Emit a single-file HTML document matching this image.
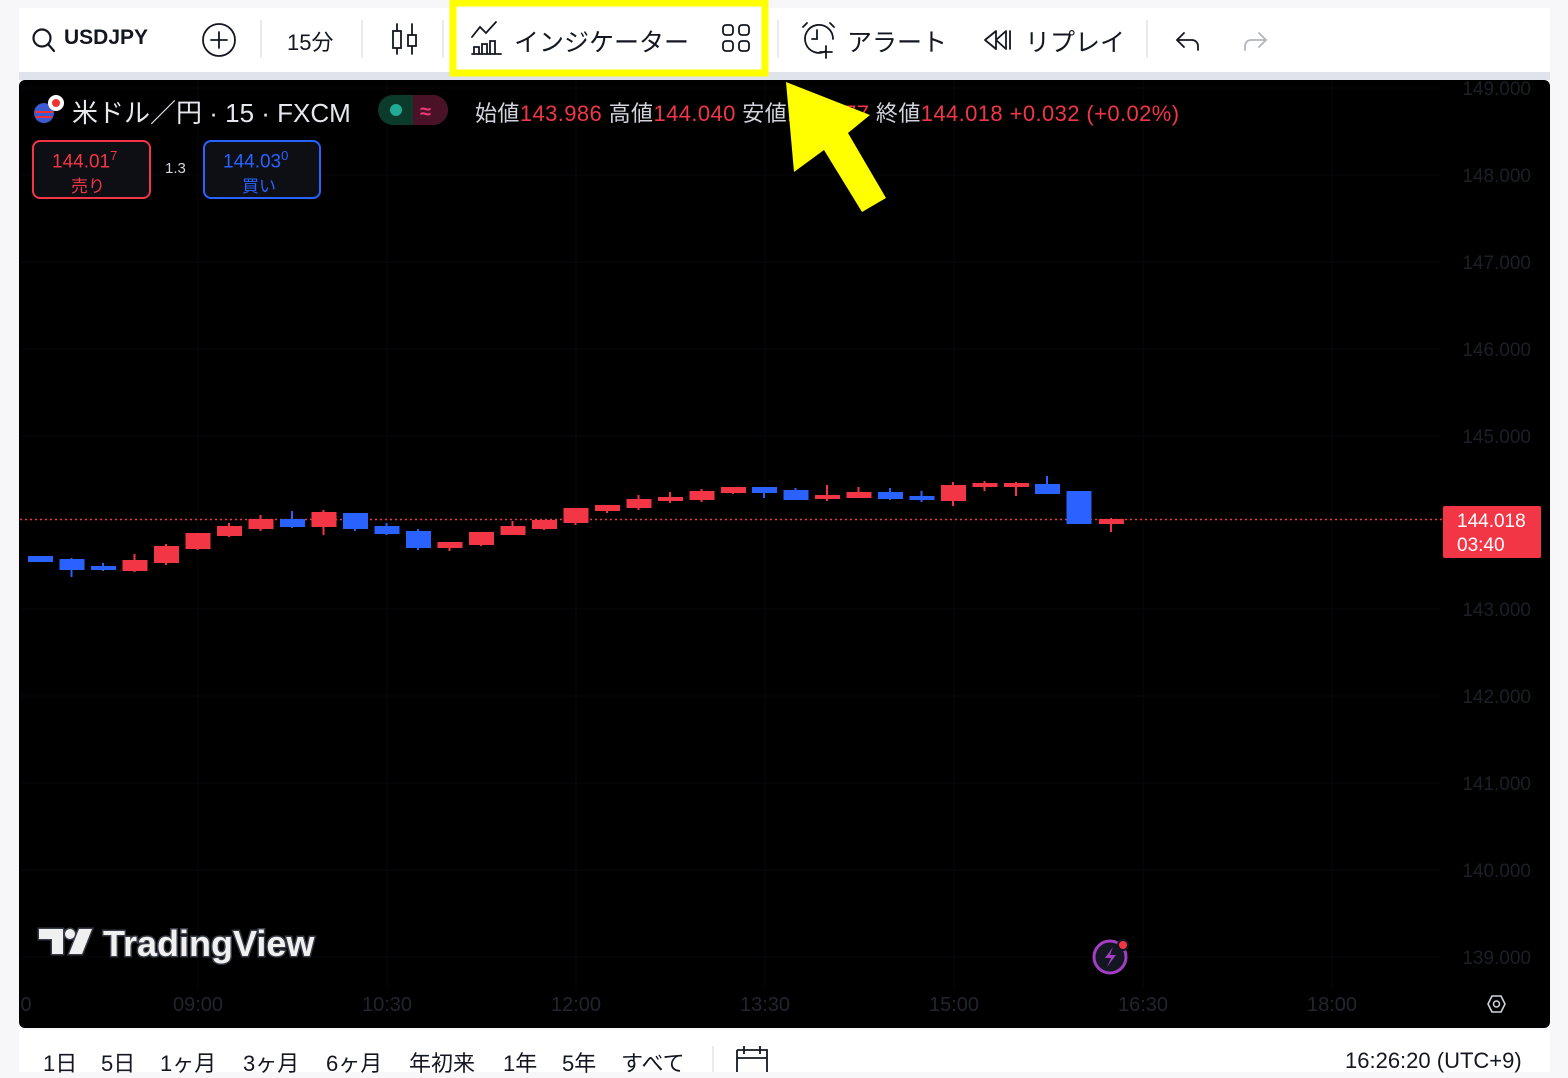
<!DOCTYPE html>
<html><head><meta charset="utf-8"><style>
*{margin:0;padding:0;box-sizing:border-box}
body{width:1568px;height:1072px;overflow:hidden;background:#f7f7f9;font-family:"Liberation Sans","Noto Sans CJK JP",sans-serif;position:relative}
.a{position:absolute;white-space:nowrap}
</style></head><body>
<div class="a" style="left:19px;top:8px;width:1531px;height:66px;background:#fff"></div>
<div class="a" style="left:19px;top:72px;width:1531px;height:8px;background:#e0e3eb"></div>
<div class="a" style="left:19px;top:1030px;width:1531px;height:42px;background:#fff"></div>

<svg class="a" style="left:0;top:0" width="1568" height="1072" viewBox="0 0 1568 1072">
<g fill="none" stroke="#131722" stroke-width="2.2" stroke-linecap="round">
<circle cx="42" cy="38" r="8.5"/><path d="M48 44l6 7"/>
<circle cx="219" cy="40" r="16" stroke-width="1.8"/><path d="M211 40h16M219 32v16" stroke-width="1.8"/>
<path d="M397 24v30M412 24v30" stroke-width="1.8"/><rect x="393" y="31" width="8" height="17" fill="#fff" stroke-width="1.8"/><rect x="408" y="35" width="8" height="11" fill="#fff" stroke-width="1.8"/>
<path d="M472 37l8-10 6 6 10-11" stroke-width="1.8"/><path d="M472 54h29M474 54v-7h5v7M482 54v-10h5v10M490 54v-13h5v13" stroke-width="1.8"/>
<rect x="723" y="25" width="10" height="10" rx="3" stroke-width="1.8"/><rect x="739" y="25" width="10" height="10" rx="3" stroke-width="1.8"/><rect x="723" y="41" width="10" height="10" rx="3" stroke-width="1.8"/><rect x="739" y="41" width="10" height="10" rx="3" stroke-width="1.8"/>
<path d="M826 51a14 14 0 1 1 7-12" stroke-width="1.8"/><path d="M817 30v9h-5M826 46v12M820 52h12M803 27l4-4M830 23l4 4" stroke-width="1.8"/>
<path d="M996 31l-11 9 11 9zM1006 31l-10 9 10 9zM1010 31v18" stroke-width="1.8" stroke-linejoin="round"/>
<path d="M1178 40h14a6 6 0 0 1 6 6v4M1184 33l-7 7 7 7" stroke-width="1.8"/>
<path d="M1265 40h-14a6 6 0 0 0-6 6v4M1259 33l7 7-7 7" stroke="#b2b5be" stroke-width="1.8"/>
</g>
<g stroke="#e0e3eb" stroke-width="1.5"><path d="M261 20v38M362 20v38M443 20v38M778 20v38M1147 20v38M713 1046v26"/></g>
<rect x="453" y="3" width="312" height="70" fill="none" stroke="#ffff00" stroke-width="7"/>
<rect x="19" y="80" width="1531" height="948" rx="6" fill="#000"/>
<g stroke="#08090c" stroke-width="1"><path d="M20 88h1420M20 175h1420M20 262h1420M20 349h1420M20 436h1420M20 609h1420M20 696h1420M20 783h1420M20 870h1420M20 957h1420M198 80v910M387 80v910M576 80v910M765 80v910M954 80v910M1143 80v910M1332 80v910"/></g>
<path d="M20 519.5H1442" stroke="#f23645" stroke-width="1.5" stroke-dasharray="2 3"/>
<rect x="1443" y="506" width="98" height="52" rx="2" fill="#f23645"/>
<text x="1457" y="527" fill="#fff" font-size="19" font-family="Liberation Sans">144.018</text>
<text x="1457" y="551" fill="#fff" font-size="19" font-family="Liberation Sans">03:40</text>
<g fill="#1c1f27" font-size="19" font-family="Liberation Sans" text-anchor="end">
<text x="1531" y="95">149.000</text><text x="1531" y="182">148.000</text><text x="1531" y="269">147.000</text><text x="1531" y="356">146.000</text><text x="1531" y="443">145.000</text><text x="1531" y="616">143.000</text><text x="1531" y="703">142.000</text><text x="1531" y="790">141.000</text><text x="1531" y="877">140.000</text><text x="1531" y="964">139.000</text>
</g>
<g fill="#22252e" font-size="20" font-family="Liberation Sans" text-anchor="middle">
<text x="26" y="1011">0</text><text x="198" y="1011">09:00</text><text x="387" y="1011">10:30</text><text x="576" y="1011">12:00</text><text x="765" y="1011">13:30</text><text x="954" y="1011">15:00</text><text x="1143" y="1011">16:30</text><text x="1332" y="1011">18:00</text>
</g>
<path d="M1488 1004l4-8h9l4 8-4 8h-9z" fill="none" stroke="#d1d4dc" stroke-width="1.6"/><circle cx="1496.5" cy="1004" r="3" fill="none" stroke="#d1d4dc" stroke-width="1.5"/>
<circle cx="1110" cy="957" r="16" fill="#131722" stroke="#a23dc4" stroke-width="3"/><path d="M1113 947l-8 11h6l-4 9 9-12h-6z" fill="#a23dc4"/><circle cx="1123" cy="945" r="5" fill="#f23645" stroke="#131722" stroke-width="2"/>
<g fill="#f0f0f0" stroke="#363a45" stroke-width="3" paint-order="stroke">
<path d="M39 929h24v25h-11v-15h-13z"/><circle cx="70" cy="934" r="5"/><path d="M79 929h13l-10 25h-13z"/>
</g>
<text x="103" y="956" font-family="Liberation Sans" font-weight="bold" font-size="36" stroke="#363a45" stroke-width="3" paint-order="stroke" fill="#f0f0f0">TradingView</text>
<circle cx="44" cy="113" r="10" fill="#3c5bd3"/><path d="M35 112h18M36 117h16" stroke="#e33" stroke-width="2"/><circle cx="56" cy="103" r="8" fill="#fff"/><circle cx="56" cy="103" r="4" fill="#e33"/>
<rect x="378" y="95" width="70" height="30" rx="15" fill="#0c3b2c"/><path d="M413 95h20a15 15 0 0 1 0 30h-20z" fill="#4a1226"/><circle cx="396" cy="110" r="6" fill="#22ab94"/><text x="420" y="118" fill="#f2397a" font-size="20" font-weight="bold">≈</text>
<rect x="33" y="141" width="117" height="57" rx="7" fill="#0d0f14" stroke="#f23645" stroke-width="2"/>
<rect x="204" y="141" width="116" height="57" rx="7" fill="#0d0f14" stroke="#2962ff" stroke-width="2"/>
<path d="M737 1050h30v22M737 1050v22M744 1046v8M760 1046v8M737 1058h30" fill="none" stroke="#131722" stroke-width="1.8"/>
</svg>

<div class="a" style="left:64px;top:26px;font-size:21px;font-weight:bold;color:#131722">USDJPY</div>
<div class="a" style="left:287px;top:25px;font-size:22px;color:#131722">15分</div>
<div class="a" style="left:514px;top:23px;font-size:25px;color:#131722">インジケーター</div>
<div class="a" style="left:847px;top:23px;font-size:25px;color:#131722">アラート</div>
<div class="a" style="left:1025px;top:23px;font-size:25px;color:#131722">リプレイ</div>

<div class="a" style="left:72px;top:93px;font-size:26px;color:#e6e8ee">米ドル／円 · 15 · FXCM</div>
<div class="a" style="left:475px;top:96px;font-size:22px;letter-spacing:0.4px;color:#d1d4dc">始値<span style="color:#f23645">143.986</span> 高値<span style="color:#f23645">144.040</span> 安値<span style="color:#f23645">143.977</span> 終値<span style="color:#f23645">144.018 +0.032 (+0.02%)</span></div>
<div class="a" style="left:52px;top:148px;font-size:19px;color:#f23645">144.01<sup style="font-size:13px">7</sup></div>
<div class="a" style="left:71px;top:172px;font-size:17px;color:#f23645">売り</div>
<div class="a" style="left:165px;top:160px;font-size:15px;color:#d1d4dc">1.3</div>
<div class="a" style="left:223px;top:148px;font-size:19px;color:#2962ff">144.03<sup style="font-size:13px">0</sup></div>
<div class="a" style="left:242px;top:172px;font-size:17px;color:#2962ff">買い</div>

<div class="a" style="left:43px;top:1046px;font-size:22px;color:#131722">1日</div>
<div class="a" style="left:101px;top:1046px;font-size:22px;color:#131722">5日</div>
<div class="a" style="left:160px;top:1046px;font-size:22px;color:#131722">1ヶ月</div>
<div class="a" style="left:243px;top:1046px;font-size:22px;color:#131722">3ヶ月</div>
<div class="a" style="left:326px;top:1046px;font-size:22px;color:#131722">6ヶ月</div>
<div class="a" style="left:409px;top:1046px;font-size:22px;color:#131722">年初来</div>
<div class="a" style="left:503px;top:1046px;font-size:22px;color:#131722">1年</div>
<div class="a" style="left:562px;top:1046px;font-size:22px;color:#131722">5年</div>
<div class="a" style="left:621px;top:1046px;font-size:22px;color:#131722">すべて</div>
<div class="a" style="left:1345px;top:1048px;font-size:22px;color:#131722">16:26:20 (UTC+9)</div>

<svg class="a" style="left:0;top:0" width="1568" height="1072">
<g stroke-width="2">
<g fill="#2962ff" stroke="#2962ff">
<path d="M40 556v5"/><rect x="29" y="557" width="23" height="4"/>
<path d="M71.5 558v19"/><rect x="60.5" y="560" width="23" height="9"/>
<path d="M103 563v8"/><rect x="92" y="567" width="23" height="2"/>
<path d="M292 511v17"/><rect x="281" y="520" width="23" height="6"/>
<path d="M355 514v17"/><rect x="344" y="514" width="23" height="14"/>
<path d="M386.5 523v12"/><rect x="375.5" y="527" width="23" height="6"/>
<path d="M418 529v21"/><rect x="407" y="532" width="23" height="15"/>
<path d="M764 487v11"/><rect x="753" y="488" width="23" height="4"/>
<path d="M795.5 488v12"/><rect x="784.5" y="491" width="23" height="8"/>
<path d="M890 488v12"/><rect x="879" y="493" width="23" height="5"/>
<path d="M921.5 491v11"/><rect x="910.5" y="497" width="23" height="2"/>
<path d="M1047 476v17"/><rect x="1036" y="485" width="23" height="8"/>
<rect x="1067.5" y="492" width="23" height="31"/>
</g>
<g fill="#f23645" stroke="#f23645">
<path d="M134.5 554v18"/><rect x="123.5" y="561" width="23" height="9"/>
<path d="M166 544v21"/><rect x="155" y="547" width="23" height="15"/>
<path d="M197.5 533v17"/><rect x="186.5" y="534" width="23" height="14"/>
<path d="M229 523v14"/><rect x="218" y="527" width="23" height="8"/>
<path d="M260.5 515v16"/><rect x="249.5" y="520" width="23" height="8"/>
<path d="M323.5 510v25"/><rect x="312.5" y="513" width="23" height="13"/>
<path d="M449.5 543v8"/><rect x="438.5" y="543" width="23" height="4"/>
<path d="M481 532v14"/><rect x="470" y="533" width="23" height="11"/>
<path d="M512.5 521v13"/><rect x="501.5" y="527" width="23" height="7"/>
<path d="M544 520v10"/><rect x="533" y="521" width="23" height="7"/>
<path d="M575.5 508v17"/><rect x="564.5" y="509" width="23" height="13"/>
<path d="M607 505v8"/><rect x="596" y="506" width="23" height="4"/>
<path d="M638.5 495v15"/><rect x="627.5" y="500" width="23" height="7"/>
<path d="M670 492v11"/><rect x="659" y="498" width="23" height="2"/>
<path d="M701.5 489v13"/><rect x="690.5" y="492" width="23" height="7"/>
<path d="M733 487v7"/><rect x="722" y="488" width="23" height="4"/>
<path d="M827 485v16"/><rect x="816" y="496" width="23" height="2"/>
<path d="M858.5 487v10"/><rect x="847.5" y="493" width="23" height="4"/>
<path d="M953 482v24"/><rect x="942" y="486" width="23" height="14"/>
<path d="M984.5 481v10"/><rect x="973.5" y="484" width="23" height="2"/>
<path d="M1016 482v14"/><rect x="1005" y="484" width="23" height="2"/>
<path d="M1111 518v14"/><rect x="1100" y="520" width="23" height="3"/>
</g>
</g>
<polygon points="786,82 870,115 848,133 886,198 862,212 824,150 794,172" fill="#ffff00"/>
</svg>
</body></html>
